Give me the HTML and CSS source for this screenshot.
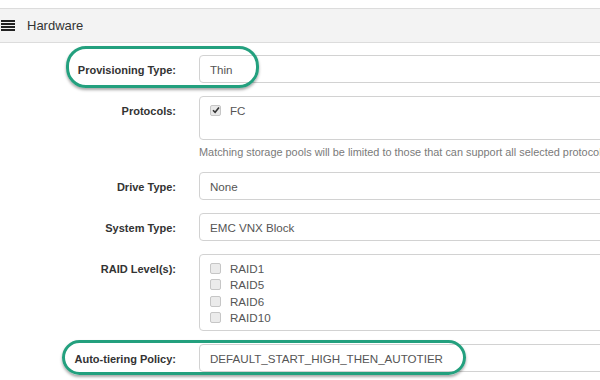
FILE: index.html
```html
<!DOCTYPE html>
<html lang="en">
<head>
  <meta charset="UTF-8">
  <title>Hardware</title>
  <link rel="stylesheet" href="styles.css">
</head>
<body>

<div class="panel">
  <div class="panel-heading">
    <svg class="icon" width="14" height="11" viewBox="0 0 14 11">
      <rect x="0" y="0" width="14" height="2"/>
      <rect x="0" y="3" width="14" height="2"/>
      <rect x="0" y="6" width="14" height="2"/>
      <rect x="0" y="9" width="14" height="2"/>
    </svg>
    <span>Hardware</span>
  </div>

  <div class="panel-body">
    <div class="row">
      <label class="control-label">Provisioning Type:</label>
      <div class="field"><div class="form-control">Thin</div></div>
      <div class="highlight hl-provisioning"></div>
    </div>

    <div class="row">
      <label class="control-label">Protocols:</label>
      <div class="field">
        <div class="form-control checklist tall">
          <div class="check"><span class="box checked"><svg width="8" height="8" viewBox="0 0 8 8"><path d="M1 4.2 L3.1 6.3 L7 1.6" fill="none" stroke="#333" stroke-width="1.6"/></svg></span>FC</div>
        </div>
        <p class="help-block">Matching storage pools will be limited to those that can support all selected protocols.</p>
      </div>
    </div>

    <div class="row">
      <label class="control-label">Drive Type:</label>
      <div class="field"><div class="form-control">None</div></div>
    </div>

    <div class="row">
      <label class="control-label">System Type:</label>
      <div class="field"><div class="form-control">EMC VNX Block</div></div>
    </div>

    <div class="row">
      <label class="control-label">RAID Level(s):</label>
      <div class="field">
        <div class="form-control checklist">
          <div class="check"><span class="box"></span>RAID1</div>
          <div class="check"><span class="box"></span>RAID5</div>
          <div class="check"><span class="box"></span>RAID6</div>
          <div class="check"><span class="box"></span>RAID10</div>
        </div>
      </div>
    </div>

    <div class="row">
      <label class="control-label">Auto-tiering Policy:</label>
      <div class="field"><div class="form-control">DEFAULT_START_HIGH_THEN_AUTOTIER</div></div>
      <div class="highlight hl-tiering"></div>
    </div>
  </div>
</div>

</body>
</html>
```

FILE: styles.css
```css
body {
  margin: 0;
  padding-top: 8px;
  font-family: "Liberation Sans", Arial, sans-serif;
  color: #333;
  background: #fff;
  overflow: hidden;
}
.panel {
  width: 760px;
}
.panel-heading {
  display: flex;
  align-items: center;
  height: 33px;
  background-color: #f3f3f3;
  border-top: 1px solid #dcdcdc;
  border-bottom: 1px solid #dcdcdc;
  font-size: 13px;
}
.panel-heading .icon {
  margin-left: 1px;
  margin-right: 12px;
  fill: #222;
}
.panel-body {
  padding-top: 12px;
}
.row {
  position: relative;
  display: flex;
  margin-bottom: 13px;
}
.control-label {
  width: 176px;
  flex-shrink: 0;
  text-align: right;
  font-weight: bold;
  font-size: 11px;
  padding-top: 9px;
  margin-right: 23px;
}
.field {
  width: 480px;
}
.form-control {
  height: 28px;
  box-sizing: border-box;
  border: 1px solid #d2d2d2;
  border-radius: 4px;
  padding: 7px 10px 0;
  font-size: 11.6px;
  color: #555;
  background: #fff;
}
.checklist {
  height: 77px;
  padding-top: 5px;
}
.checklist.tall {
  height: 44px;
}
.check {
  display: flex;
  align-items: center;
  height: 16.5px;
  font-size: 11.6px;
  color: #555;
}
.box {
  display: flex;
  align-items: center;
  justify-content: center;
  width: 9px;
  height: 9px;
  margin-right: 9px;
  border: 1px solid #c6c6c6;
  border-radius: 2px;
  background: #ebebeb;
}
.box.checked {
  background: #e8e8e8;
}
.help-block {
  margin: 6px 0 1px;
  font-size: 10.9px;
  color: #7a7a7a;
  white-space: nowrap;
}
.highlight {
  position: absolute;
  border: 3px solid #23a07e;
  border-radius: 20px;
  box-shadow: 0 2px 3px rgba(0, 0, 0, 0.35);
  pointer-events: none;
}
.hl-provisioning {
  left: 66px;
  top: -9px;
  width: 187px;
  height: 36px;
}
.hl-tiering {
  left: 62px;
  top: -4px;
  width: 398px;
  height: 29px;
}
```
